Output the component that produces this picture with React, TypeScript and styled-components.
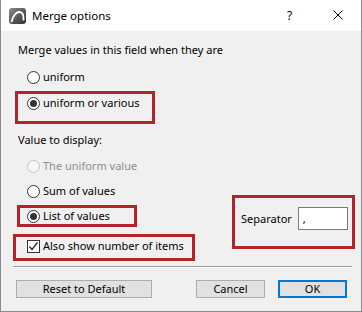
import styled, { createGlobalStyle } from 'styled-components';

const GlobalStyle = createGlobalStyle`
  html, body {
    margin: 0;
    padding: 0;
    background: #ffffff;
  }
  body {
    font-family: 'Noto Sans', 'Open Sans', sans-serif;
    font-size: 11px;
    color: #000;
  }
`;

export default function App() {
  return (
    <>
      <GlobalStyle />
      <Window>
        <TitleBar>
          <AppIcon />
          <Title>Merge options</Title>
          <HelpMark>?</HelpMark>
          <CloseIcon />
        </TitleBar>
        <Body>
          <Heading>Merge values in this field when they are</Heading>
          <Option indent={15} top={11}>
            <Radio />
            <span>uniform</span>
          </Option>
          <Mark left={3} top={6} pad="1px 0 10px 9px">
            <Option>
              <Radio checked />
              <span>uniform or various</span>
            </Option>
          </Mark>
          <Heading top={8}>Value to display:</Heading>
          <Option indent={15} top={10}>
            <Radio disabled />
            <Muted>The uniform value</Muted>
          </Option>
          <Option indent={15} top={9}>
            <Radio />
            <span>Sum of values</span>
          </Option>
          <Split>
            <Column>
              <Mark left={5} top={6} pad="0 0 0 7px" width={120}>
                <Option>
                  <Radio checked />
                  <span>List of values</span>
                </Option>
              </Mark>
              <Mark left={1} top={7} pad="1px 0 4px 11px" width={182}>
                <Option>
                  <Checkbox checked />
                  <span>Also show number of items</span>
                </Option>
              </Mark>
            </Column>
            <SeparatorBox>
              <span>Separator</span>
              <TextInput>,</TextInput>
            </SeparatorBox>
          </Split>
          <Rule />
          <Buttons>
            <Button width={136}>Reset to Default</Button>
            <Spacer />
            <Button width={69}>Cancel</Button>
            <Button width={69} primary>
              OK
            </Button>
          </Buttons>
        </Body>
      </Window>
    </>
  );
}

function AppIcon() {
  return (
    <svg width="17" height="16" viewBox="0 0 17 16">
      <defs>
        <linearGradient id="ac" x1="0" y1="0" x2="1" y2="1">
          <stop offset="0" stopColor="#8c8c8c" />
          <stop offset="1" stopColor="#2e2e2e" />
        </linearGradient>
      </defs>
      <rect x="0" y="0" width="17" height="16" rx="3" fill="url(#ac)" />
      <path
        d="M2.5 14 C4 7, 8 3.2, 11.5 4.2 C14 5, 14.5 7.5, 14.5 10.5 L14.5 12.5"
        fill="none"
        stroke="#fff"
        strokeWidth="1.8"
      />
    </svg>
  );
}

function CloseIcon() {
  return (
    <CloseWrap>
      <svg width="10" height="10" viewBox="0 0 10 10">
        <path d="M0.5 0.5 L9.5 9.5 M9.5 0.5 L0.5 9.5" stroke="#000" strokeWidth="1" />
      </svg>
    </CloseWrap>
  );
}

function Radio({ checked, disabled }: { checked?: boolean; disabled?: boolean }) {
  return <RadioCircle checked={!!checked} disabled={!!disabled} />;
}

function Checkbox({ checked }: { checked?: boolean }) {
  return (
    <CheckBoxSquare>
      {checked && (
        <svg width="11" height="11" viewBox="0 0 11 11">
          <path d="M1.5 5.5 L4 8.5 L9.5 1.5" fill="none" stroke="#222" strokeWidth="1.3" />
        </svg>
      )}
    </CheckBoxSquare>
  );
}

const Window = styled.div`
  width: 362px;
  height: 312px;
  box-sizing: border-box;
  border: 1px solid #8a8a8a;
  border-top: none;
  background: #f0f0f0;
  display: flex;
  flex-direction: column;
`;

const TitleBar = styled.div`
  height: 31px;
  background: #fff;
  display: flex;
  align-items: center;
  padding: 0 0 0 8px;
  box-sizing: border-box;
`;

const Title = styled.div`
  font-size: 11.5px;
  margin-left: 6px;
  flex: 1;
  padding-bottom: 1px;
`;

const HelpMark = styled.div`
  font-size: 12px;
  width: 8px;
  margin-right: 38px;
  padding-bottom: 1px;
`;

const CloseWrap = styled.div`
  display: flex;
  margin-right: 18px;
  margin-top: -1px;
`;

const Body = styled.div`
  flex: 1;
  display: flex;
  flex-direction: column;
  padding: 0 9px 0 11px;
`;

const Heading = styled.div<{ top?: number }>`
  height: 16px;
  line-height: 16px;
  margin-left: 6px;
  margin-top: ${(p) => p.top ?? 11}px;
`;

const Option = styled.div<{ indent?: number; top?: number }>`
  display: flex;
  align-items: center;
  height: 16px;
  line-height: 16px;
  gap: 3px;
  margin-left: ${(p) => p.indent ?? 0}px;
  margin-top: ${(p) => p.top ?? 0}px;
  white-space: nowrap;
`;

const Muted = styled.span`
  color: #8d8d8d;
`;

const Mark = styled.div<{ left: number; top: number; pad: string; width?: number }>`
  border: 3px solid #b3242a;
  box-sizing: border-box;
  margin-left: ${(p) => p.left}px;
  margin-top: ${(p) => p.top}px;
  padding: ${(p) => p.pad};
  width: ${(p) => (p.width ? `${p.width}px` : '140px')};
`;

const RadioCircle = styled.span<{ checked: boolean; disabled: boolean }>`
  width: 13px;
  height: 13px;
  box-sizing: border-box;
  border-radius: 50%;
  border: 1px solid ${(p) => (p.disabled ? '#c4c4c4' : '#333')};
  background: ${(p) => (p.disabled ? '#f7f7f7' : '#fff')};
  display: flex;
  align-items: center;
  justify-content: center;
  flex-shrink: 0;

  &::after {
    content: '';
    display: ${(p) => (p.checked ? 'block' : 'none')};
    width: 7px;
    height: 7px;
    border-radius: 50%;
    background: #333;
  }
`;

const CheckBoxSquare = styled.span`
  width: 13px;
  height: 13px;
  box-sizing: border-box;
  border: 1px solid #333;
  background: #fff;
  display: flex;
  align-items: center;
  justify-content: center;
  flex-shrink: 0;
`;

const Split = styled.div`
  display: flex;
  align-items: flex-start;
  justify-content: space-between;
`;

const Column = styled.div`
  display: flex;
  flex-direction: column;
`;

const SeparatorBox = styled.div`
  width: 123px;
  height: 54px;
  box-sizing: border-box;
  border: 3px solid #b3242a;
  display: flex;
  align-items: center;
  gap: 6px;
  padding: 0 4px 7px 6px;
  margin-right: -3px;
  margin-top: -4px;
`;

const TextInput = styled.div`
  width: 51px;
  height: 23px;
  box-sizing: border-box;
  border: 1px solid #7a7a7a;
  background: #fff;
  padding: 0 4px;
  line-height: 21px;
  margin-left: auto;
`;

const Rule = styled.div`
  height: 1px;
  background: #a0a0a0;
  border-bottom: 1px solid #fff;
  margin: 5px 0 0 1px;
`;

const Buttons = styled.div`
  display: flex;
  gap: 13px;
  margin-top: 12px;
  padding: 0 5px 0 4px;
`;

const Spacer = styled.div`
  flex: 1;
`;

const Button = styled.button<{ width: number; primary?: boolean }>`
  width: ${(p) => p.width}px;
  height: 18px;
  box-sizing: border-box;
  border: ${(p) => (p.primary ? '2px solid #0078d7' : '1px solid #adadad')};
  background: #e1e1e1;
  font-family: 'Noto Sans', 'Open Sans', sans-serif;
  font-size: 11px;
  color: #000;
  padding: 0;
  line-height: 14px;
  display: flex;
  align-items: center;
  justify-content: center;
`;
